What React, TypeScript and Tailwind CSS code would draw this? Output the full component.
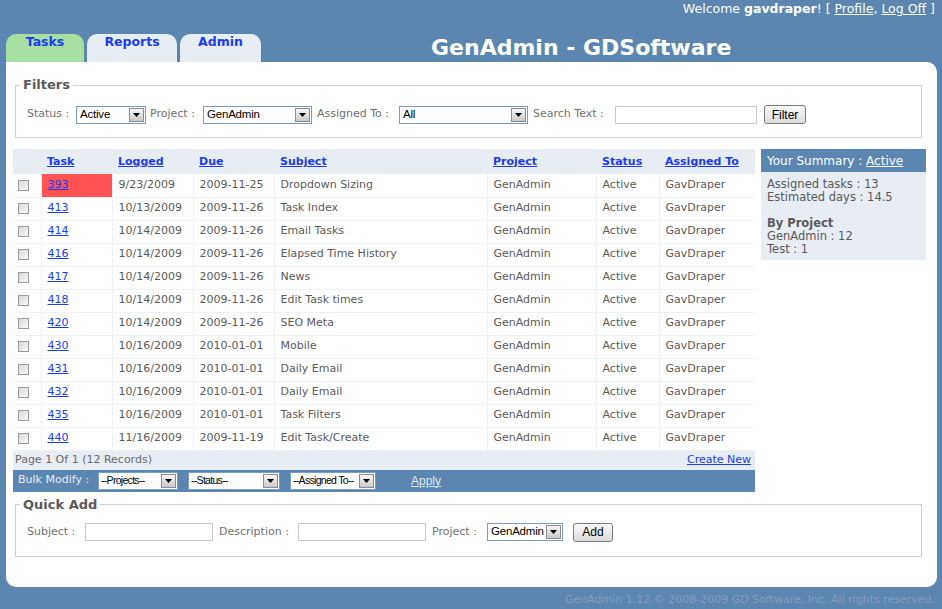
import React from "react";

interface Task {
  id: number;
  logged: string;
  due: string;
  subject: string;
}

const tasks: Task[] = [
  { id: 393, logged: "9/23/2009", due: "2009-11-25", subject: "Dropdown Sizing" },
  { id: 413, logged: "10/13/2009", due: "2009-11-26", subject: "Task Index" },
  { id: 414, logged: "10/14/2009", due: "2009-11-26", subject: "Email Tasks" },
  { id: 416, logged: "10/14/2009", due: "2009-11-26", subject: "Elapsed Time History" },
  { id: 417, logged: "10/14/2009", due: "2009-11-26", subject: "News" },
  { id: 418, logged: "10/14/2009", due: "2009-11-26", subject: "Edit Task times" },
  { id: 420, logged: "10/14/2009", due: "2009-11-26", subject: "SEO Meta" },
  { id: 430, logged: "10/16/2009", due: "2010-01-01", subject: "Mobile" },
  { id: 431, logged: "10/16/2009", due: "2010-01-01", subject: "Daily Email" },
  { id: 432, logged: "10/16/2009", due: "2010-01-01", subject: "Daily Email" },
  { id: 435, logged: "10/16/2009", due: "2010-01-01", subject: "Task Filters" },
  { id: 440, logged: "11/16/2009", due: "2009-11-19", subject: "Edit Task/Create" },
];

const Select = ({ value, w, tight }: { value: string; w: string; tight?: boolean }) => (
  <div className={`flex h-[18px] shrink-0 items-stretch border border-[#7f9db9] bg-white ${w}`}>
    <span
      className={`flex-1 overflow-hidden whitespace-nowrap font-['Liberation_Sans',sans-serif] leading-[15px] text-black ${
        tight ? "pl-[2px] text-[10.5px] tracking-[-0.7px]" : "pl-[3px] text-[11.5px] tracking-[-0.2px]"
      }`}
    >
      {value}
    </span>
    <span className="m-[1px] flex w-[15px] items-center justify-center border border-[#8c8c8c] bg-gradient-to-b from-[#f6f6f6] to-[#c9c9c9]">
      <svg width="7" height="4" viewBox="0 0 7 4">
        <path d="M0 0h7L3.5 4z" fill="#000" />
      </svg>
    </span>
  </div>
);

const TextBox = ({ w }: { w: string }) => (
  <div className={`h-[18px] shrink-0 border border-[#c5c9cf] bg-white ${w}`} />
);

const Button = ({ label, w }: { label: string; w: string }) => (
  <div
    className={`flex h-[19px] shrink-0 items-center justify-center rounded-[3px] border border-[#7a7a7a] bg-gradient-to-b from-[#fbfbfb] to-[#dcdcdc] font-['Liberation_Sans',sans-serif] text-[12px] text-black ${w}`}
  >
    {label}
  </div>
);

const Checkbox = () => (
  <div className="h-[11px] w-[11px] border border-[#9a9a9a] bg-gradient-to-br from-[#d8d8d8] to-[#fafafa]" />
);

const Label = ({ children, w }: { children: React.ReactNode; w: string }) => (
  <span className={`shrink-0 whitespace-nowrap text-[11px] text-[#707070] ${w}`}>{children}</span>
);

export default function App() {
  return (
    <div className="relative h-[609px] w-[942px] overflow-hidden bg-[#5b86b1] font-['DejaVu_Sans',Verdana,sans-serif]">
      {/* welcome */}
      <div className="flex h-[34px] justify-end pr-[7px] pt-[1px] text-[12.5px] leading-[15px] text-white">
        <span>
          Welcome <b>gavdraper</b>! [ <span className="underline">Profile</span>,{" "}
          <span className="underline">Log Off</span> ]
        </span>
      </div>

      {/* tabs + title */}
      <div className="flex h-[28px] items-end pl-[6px]">
        <div className="flex h-[28px] w-[78px] justify-center rounded-t-[10px] bg-[#a6e0a1] text-[12.5px] font-bold leading-[15px] text-[#1a3cf5]">
          Tasks
        </div>
        <div className="ml-[3px] flex h-[28px] w-[90px] justify-center rounded-t-[10px] bg-[#e8edf3] text-[12.5px] font-bold leading-[15px] text-[#1a3cf5]">
          Reports
        </div>
        <div className="ml-[3px] flex h-[28px] w-[81px] justify-center rounded-t-[10px] bg-[#e8edf3] text-[12.5px] font-bold leading-[15px] text-[#1a3cf5]">
          Admin
        </div>
        <div className="ml-[170px] self-start pt-[1px] text-[22px] font-bold leading-[26px] text-white">
          GenAdmin - GDSoftware
        </div>
      </div>

      {/* main panel */}
      <div className="ml-[6px] h-[525px] w-[931px] rounded-b-[10px] rounded-tr-[10px] bg-white pl-[7px] pt-[16px]">
        {/* Filters */}
        <fieldset className="ml-[2px] h-[60px] w-[907px] border border-[#cfcfcf] px-[4px]">
          <legend className="px-[3px] text-[13px] font-bold leading-[14px] text-[#5a5a5a]">Filters</legend>
          <div className="flex items-center pl-[7px] pt-[13px]">
            <Label w="w-[49px]">Status :</Label>
            <Select value="Active" w="w-[70px]" />
            <Label w="ml-[4px] w-[53px]">Project :</Label>
            <Select value="GenAdmin" w="w-[109px]" />
            <Label w="ml-[5px] w-[82px]">Assigned To :</Label>
            <Select value="All" w="w-[129px]" />
            <Label w="ml-[5px] w-[82px]">Search Text :</Label>
            <TextBox w="w-[142px]" />
            <div className="ml-[7px]">
              <Button label="Filter" w="w-[42px]" />
            </div>
          </div>
        </fieldset>

        {/* table + summary */}
        <div className="mt-[11px] flex items-start">
          <div className="w-[742px]">
            <table className="w-[742px] table-fixed border-collapse text-[11px] text-[#5a5a5a]">
              <colgroup>
                <col className="w-[28px]" />
                <col className="w-[71px]" />
                <col className="w-[81px]" />
                <col className="w-[81px]" />
                <col className="w-[213px]" />
                <col className="w-[109px]" />
                <col className="w-[63px]" />
                <col className="w-[96px]" />
              </colgroup>
              <thead>
                <tr className="h-[25px] bg-[#e8edf3] text-left font-bold text-[#1a3cf5]">
                  <th />
                  {["Task", "Logged", "Due", "Subject", "Project", "Status", "Assigned To"].map((h) => (
                    <th key={h} className="pl-[6px] pt-[1px] font-bold">
                      <span className="underline">{h}</span>
                    </th>
                  ))}
                </tr>
              </thead>
              <tbody>
                {tasks.map((t) => (
                  <tr key={t.id} className="h-[23px] border-b border-[#eef1f5]">
                    <td className="border-r border-[#eef1f5] pl-[5px]">
                      <Checkbox />
                    </td>
                    <td
                      className={`border-r border-[#eef1f5] pl-[6px] text-[#1a3cf5] ${
                        t.id === 393 ? "bg-[#ff5353]" : ""
                      }`}
                    >
                      <span className="underline">{t.id}</span>
                    </td>
                    <td className="border-r border-[#eef1f5] pl-[6px]">{t.logged}</td>
                    <td className="border-r border-[#eef1f5] pl-[6px]">{t.due}</td>
                    <td className="border-r border-[#eef1f5] pl-[6px]">{t.subject}</td>
                    <td className="border-r border-[#eef1f5] pl-[6px]">GenAdmin</td>
                    <td className="border-r border-[#eef1f5] pl-[6px]">Active</td>
                    <td className="pl-[6px]">GavDraper</td>
                  </tr>
                ))}
              </tbody>
            </table>
            <div className="flex h-[19px] items-center justify-between bg-[#e8edf3] pl-[2px] pr-[4px] text-[11px]">
              <span className="text-[#6a6a6a]">Page 1 Of 1 (12 Records)</span>
              <span className="text-[#1a3cf5] underline">Create New</span>
            </div>
            <div className="flex h-[22px] items-center bg-[#5b86b1] pl-[5px] text-[11px]">
              <span className="w-[80px] shrink-0 whitespace-nowrap text-[#e8eef5]">Bulk Modify :</span>
              <Select value="--Projects--" w="w-[80px]" tight />
              <div className="ml-[10px]">
                <Select value="--Status--" w="w-[92px]" tight />
              </div>
              <div className="ml-[10px]">
                <Select value="--Assigned To--" w="w-[86px]" tight />
              </div>
              <span className="ml-[35px] font-['Liberation_Sans',sans-serif] text-[12px] text-[#dde7f2] underline">
                Apply
              </span>
            </div>
          </div>

          <div className="ml-[6px] w-[165px]">
            <div className="flex h-[23px] items-center bg-[#5b86b1] pl-[6px] text-[12px] text-white">
              Your Summary :&nbsp;<span className="underline">Active</span>
            </div>
            <div className="h-[88px] bg-[#e8edf3] pl-[6px] pt-[6px] text-[11.5px] leading-[13px] text-[#5a5a5a]">
              <div>Assigned tasks : 13</div>
              <div>Estimated days : 14.5</div>
              <div className="mt-[13px] font-bold">By Project</div>
              <div>GenAdmin : 12</div>
              <div>Test : 1</div>
            </div>
          </div>
        </div>

        {/* Quick add */}
        <fieldset className="ml-[2px] mt-[6px] h-[59px] w-[907px] border border-[#cfcfcf] px-[4px]">
          <legend className="px-[3px] text-[13px] font-bold leading-[14px] text-[#5a5a5a]">Quick Add</legend>
          <div className="flex items-center pl-[7px] pt-[11px]">
            <Label w="w-[58px]">Subject :</Label>
            <TextBox w="w-[128px]" />
            <Label w="ml-[6px] w-[79px]">Description :</Label>
            <TextBox w="w-[128px]" />
            <Label w="ml-[6px] w-[55px]">Project :</Label>
            <Select value="GenAdmin" w="w-[76px]" />
            <div className="ml-[10px]">
              <Button label="Add" w="w-[40px]" />
            </div>
          </div>
        </fieldset>
      </div>

      {/* footer */}
      <div className="flex justify-end pr-[7px] pt-[5px] text-[11px] text-[#7fa0c6]">
        GenAdmin 1.12 © 2008-2009 GD Software, Inc. All rights reserved.
      </div>
    </div>
  );
}
